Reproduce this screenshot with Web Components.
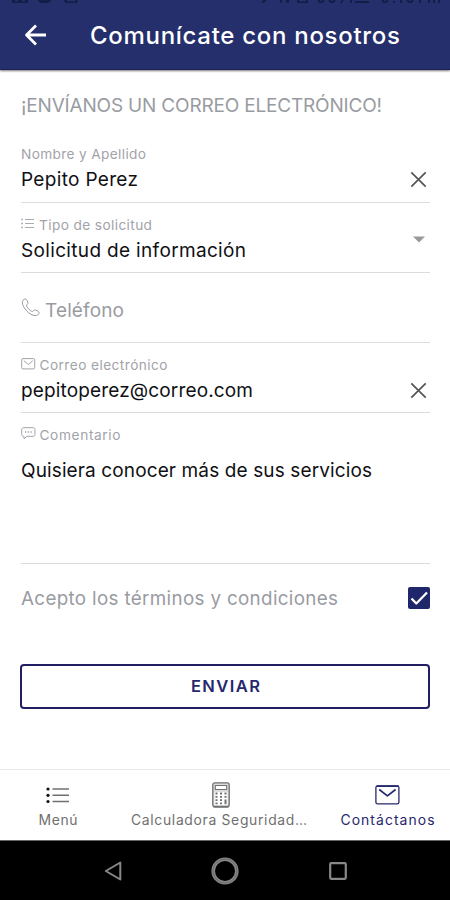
<!DOCTYPE html>
<html lang="es">
<head>
<meta charset="utf-8">
<title>Comunícate con nosotros</title>
<style>
html,body{margin:0;padding:0;background:#fff}
body{font-family:Inter,Roboto,"Liberation Sans",sans-serif}
</style>
</head>
<body>
<contact-screen></contact-screen>
<script>
const define = (name, html, ready) => {
  const t = document.createElement('template');
  t.innerHTML = html;
  customElements.define(name, class extends HTMLElement {
    constructor() {
      super();
      this.attachShadow({mode: 'open'}).append(t.content.cloneNode(true));
    }
    connectedCallback() { if (ready) ready(this); }
  });
};

/* Single line of text whose tracking fills the given width. */
define('tracked-text', `<style>
:host{display:inline-block;white-space:nowrap;line-height:1.2}
span{display:inline-block}
</style><span><slot></slot></span>`, el => {
  const span = el.shadowRoot.querySelector('span');
  const n = el.textContent.length;
  span.style.letterSpacing = '0px';
  const w = span.getBoundingClientRect().width;
  const ls = (Number(el.getAttribute('width')) - w) / (n - 1);
  span.style.letterSpacing = ls + 'px';
  span.style.marginRight = -ls + 'px';
});

const icons = {
  back: [23,22,'<path d="M22 11H3M12 1.500 2.500 11l9.500 9.500" stroke-width="2.800"/>'],
  list: [13,11,'<path d="M4 1.500h9M4 5.500h9M4 9.500h9" stroke-width=".9"/><path d="M.3 1.500h1.600M.3 5.500h1.600M.3 9.500h1.600" stroke-width="1.500"/>'],
  phone: [19,19,'<path d="M1.300 4.800C1 2.900 2.700 1 4.300.9c1.300 0 2.900 3.600 2.600 4.500-.3 1-1.700 1.500-1.300 2.600.6 1.700 3.500 4.700 5.300 5.400 1.100.4 1.600-1.200 2.700-1.500 1-.2 4.500 1.500 4.500 2.700 0 1.600-2 3.300-4 3C8.500 17.300 1.800 9.800 1.300 4.800Z"/>'],
  mail: [15,12,'<rect x=".7" y=".6" width="13" height="10.300" rx="1.300"/><path d="m2.800 2.700 4.500 3.800 4.500-3.800"/>'],
  chat: [15,13,'<path d="M2.500.7h9.700c1 0 1.800.8 1.800 1.800v5c0 1-.8 1.800-1.800 1.800H6L3 11.800V9.300h-.5C1.500 9.300.7 8.500.7 7.500v-5c0-1 .8-1.800 1.800-1.800Z"/><path d="M4 5h1.300M6.700 5H8M9.500 5h1.300" stroke-width="1.300"/>'],
  clear: [17,17,'<path d="m1.300 1.300 14.400 14.400M15.700 1.300 1.300 15.700" stroke-width="1.700"/>'],
  drop: [12,7,'<path d="M0 .5h12L6 6.500Z" fill="currentColor" stroke="none"/>'],
  check: [22,22,'<rect width="22" height="22" rx="2" fill="currentColor" stroke="none"/><path d="m3.500 11.500 4.800 5L19 5.500" stroke="#fff" stroke-width="2.300"/>'],
  menu: [24,18,'<path d="M6.500 3H23M6.500 9.300H23M6.500 15.500H23" stroke-width="1.500"/><g fill="#111" stroke="none"><circle cx="2" cy="3" r="1.600"/><circle cx="2" cy="9.300" r="1.600"/><circle cx="2" cy="15.500" r="1.600"/></g>'],
  calc: [18,26,'<rect x=".8" y=".8" width="16.400" height="24" rx="2" stroke-width="1.300" fill="#ddd"/><rect x="3.300" y="3.500" width="11.400" height="4" stroke-width="1.100" fill="#fff"/><rect x="2.500" y="10" width="13" height="13" fill="#fff" stroke="none"/><path d="M3.500 11.500h2M8 11.500h2M12.500 11.500h2M3.500 14.800h2M8 14.800h2M12.500 14.800h2M3.500 18.100h2M8 18.100h2M3.500 21.400h2M8 21.400h2" stroke-width="1.800"/><path d="M13.500 17.500v4.700" stroke-width="2"/><path d="M1.500 24.700h15" stroke-width="1.700"/>'],
  envelope: [25,20,'<rect x=".9" y=".9" width="23" height="18" rx="1.700" stroke-width="1.300"/><path d="M1.500 1.200h22" stroke-width="1.600"/><path d="m4.200 4.500 8.200 6.300 8.200-6.300" stroke-width="1.700"/>'],
  navback: [18,20,'<path d="M16.300 1.500v17L1.800 10Z" stroke-width="2"/>'],
  home: [28,28,'<circle cx="14" cy="14" r="11.800" stroke-width="3.600"/><circle cx="14" cy="14" r="12" stroke="#555" stroke-width=".6"/>'],
  recent: [18,18,'<rect x="1.200" y="1.200" width="15.600" height="15.600" rx="1" stroke-width="2.200"/>'],
  status: [450,4,'<g fill="#141d48" stroke="none" transform="translate(0 -.5)"><path d="M12 0h3v2h3V0h4v2h3V0h3v3.500H12ZM38 0h13v2h-2v1.500H40V2h-2ZM64 0h2l2 2h7l1-2h2l-1 3.500H65Z"/><path d="M263 0h4l-3 3.500h-2ZM280 0h2v3h-2ZM286 0h3v3h-3ZM297 0h2v2h7V0h2v3.500h-11ZM317 0h2l2 2 2-2h2l-2 3.500h-4ZM328 0h2l2 2 2-2h2l-2 3.500h-4ZM342 0h2l-2 3.500h-2ZM350 0h2v3.500h-2ZM355 1.500h14v2h-14ZM381 0h2l2 2 2-2h2l-2 3.500h-4ZM393 1.500h2v2h-2ZM400 0h2v3.500h-2ZM406 0h2l2 2 2-2h2l-2 3.500h-4ZM419 0h2v3.500h-2ZM428 0h2v3.500h-2ZM433 0h2v3.500h-2ZM438 0h2v3.500h-2Z"/></g>']
};
define('ui-icon', `<style>:host{display:block;flex:none}svg{display:block}</style><div></div>`, el => {
  const [w,h,art] = icons[el.getAttribute('name')];
  el.shadowRoot.querySelector('div').innerHTML = `<svg width="${w}" height="${h}" viewBox="0 0 ${w} ${h}" fill="none" stroke="currentColor" stroke-width="1" stroke-linejoin="round">${art}</svg>`;
});

define('app-header', `<style>
:host{display:block;height:70px;box-sizing:border-box;background:#252f6b;color:#fff;border-bottom:1px solid #1d2254;box-shadow:0 1px 2px #777}
.bar{display:flex;align-items:center;height:62px;padding-left:24px;gap:43px}
ui-icon[name=status]{height:4px}
</style><ui-icon name="status"></ui-icon><div class="bar"><ui-icon name="back"></ui-icon><slot></slot></div>`);

define('form-field', `<style>
:host{display:flex;flex-direction:column;box-sizing:border-box;border-bottom:1px solid #dcdcde;color:#101014}
.label{display:flex;align-items:center;gap:4px;height:18px;color:#a2a3a9;font-size:13.700px}
.value{display:flex;align-items:center;height:34px;font-size:19px;justify-content:space-between}
.end{color:#555;padding-right:3px;margin-top:-2px}
</style><div class="label"><slot name="icon"></slot><slot name="label"></slot></div>
<div class="value"><slot></slot><div class="end"><slot name="end"></slot></div></div>`);

define('nav-tab', `<style>
:host{display:flex;flex-direction:column;align-items:center;color:#707070;font-size:13.900px}
:host([active]){color:#26286e}
.art{height:28px;display:flex;align-items:center;margin-bottom:3px}
</style><div class="art"><slot name="icon"></slot></div><slot></slot>`);

define('system-bar', `<style>
:host{display:grid;grid-template-columns:104px 18px 89px 28px 90px 18px;height:60px;align-items:center;background:#000;color:#888;border-top:1px solid #666;box-sizing:border-box}
ui-icon{grid-row:1}
</style><ui-icon name="navback" style="grid-column:2"></ui-icon><ui-icon name="home" style="grid-column:4"></ui-icon><ui-icon name="recent" style="grid-column:6"></ui-icon>`);

define('contact-screen', `<style>
:host{display:flex;flex-direction:column;width:450px;height:900px;overflow:hidden;background:#fff}
app-header{flex:none}
app-header tracked-text{font-size:24px;font-weight:500;margin-top:3px}
main{flex:1;padding:0 20px 0 21px}
h1{margin:0;height:50px;margin-top:24px;font-size:19px;font-weight:400;color:#999ba2}
.name{height:58px;margin-top:1px}
.type{height:70px;padding-top:13px}
.drop{color:#999;margin-top:-14px;padding-right:2px}
.phone{height:70px;border-bottom:1px solid #dcdcde;box-sizing:border-box;display:flex;align-items:center;gap:5px;color:#999ba2;font-size:19px;padding-top:7px}
.phone ui-icon{margin-top:-8px}
.mail{height:70px;padding-top:13px}
.comment{height:151px;padding-top:13px}
.lift{margin-top:-3px}
.terms{display:flex;justify-content:space-between;align-items:center;height:68px;margin-bottom:1px;color:#999ba2;font-size:18.800px}
.terms tracked-text{padding-top:2px}
.terms ui-icon{color:#20266a}
.send{all:unset;display:flex;align-items:center;justify-content:center;box-sizing:border-box;width:410px;height:45px;margin-top:32px;margin-left:-.600px;border:2px solid #211f62;border-radius:4px;color:#26286c;font-size:16.500px;font-weight:600}
nav{height:71px;box-sizing:border-box;border-top:1px solid #e8e8ea;display:grid;grid-template-columns:116px 207px 127px;padding-top:11px}
nav nav-tab:nth-child(2) ui-icon{margin-left:3px}
nav nav-tab:nth-child(2){margin-left:-1px}
nav nav-tab:nth-child(3){margin-left:2px}
</style>
<app-header><tracked-text width="310">Comunícate con nosotros</tracked-text></app-header>
<main>
<h1><tracked-text width="361">¡ENVÍANOS UN CORREO ELECTRÓNICO!</tracked-text></h1>
<form-field class="name"><tracked-text slot="label" width="125">Nombre y Apellido</tracked-text><tracked-text width="117">Pepito Perez</tracked-text><ui-icon slot="end" name="clear"></ui-icon></form-field>
<form-field class="type"><ui-icon slot="icon" class="lift" name="list"></ui-icon><tracked-text slot="label" width="113" style="margin-left:1px">Tipo de solicitud</tracked-text><tracked-text width="225">Solicitud de información</tracked-text><ui-icon slot="end" class="drop" name="drop"></ui-icon></form-field>
<div class="phone"><ui-icon name="phone"></ui-icon><tracked-text width="79">Teléfono</tracked-text></div>
<form-field class="mail"><ui-icon slot="icon" class="lift" name="mail"></ui-icon><tracked-text slot="label" width="128" style="margin-left:-.500px">Correo electrónico</tracked-text><tracked-text width="232">pepitoperez@correo.com</tracked-text><ui-icon slot="end" name="clear"></ui-icon></form-field>
<form-field class="comment"><ui-icon slot="icon" class="lift" name="chat"></ui-icon><tracked-text slot="label" width="81" style="margin-left:-.500px">Comentario</tracked-text><tracked-text width="351" style="margin-top:21px">Quisiera conocer más de sus servicios</tracked-text></form-field>
<div class="terms"><tracked-text width="317">Acepto los términos y condiciones</tracked-text><ui-icon name="check"></ui-icon></div>
<button class="send"><tracked-text width="69">ENVIAR</tracked-text></button>
</main>
<nav>
<nav-tab><ui-icon slot="icon" name="menu"></ui-icon><tracked-text width="39">Menú</tracked-text></nav-tab>
<nav-tab><ui-icon slot="icon" name="calc"></ui-icon><tracked-text width="176">Calculadora Seguridad…</tracked-text></nav-tab>
<nav-tab active><ui-icon slot="icon" name="envelope"></ui-icon><tracked-text width="94">Contáctanos</tracked-text></nav-tab>
</nav>
<system-bar></system-bar>`);
</script>
</body>
</html>
